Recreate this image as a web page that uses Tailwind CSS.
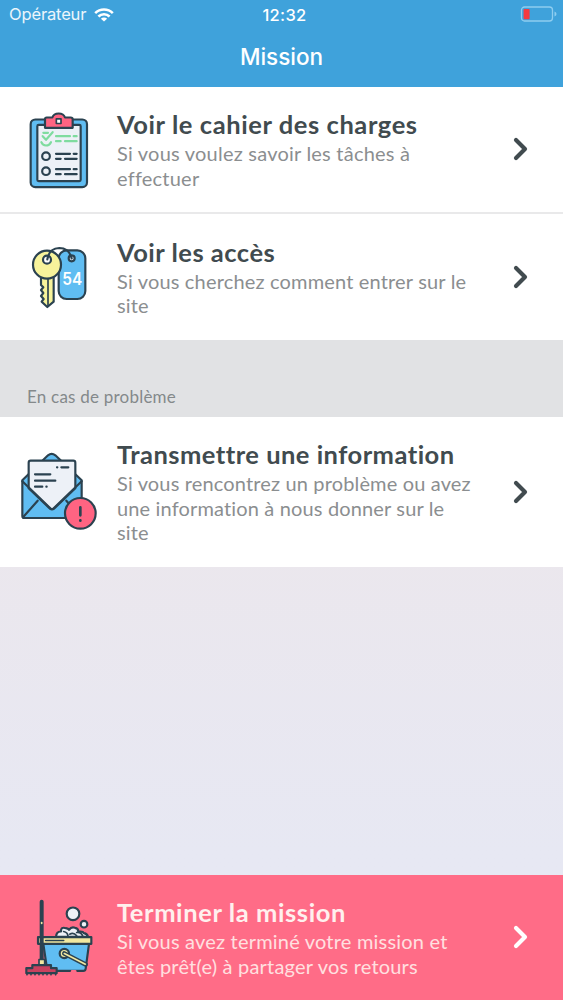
<!DOCTYPE html>
<html lang="fr">
<head>
  <meta charset="UTF-8" />
  <meta name="viewport" content="width=device-width, initial-scale=1.0"/>
  <title>Mission</title>
  <script src="https://cdn.jsdelivr.net/npm/@tailwindcss/browser@4"></script>
</head>
<body class="font-[Lato,sans-serif]">
  <div class="flex flex-col h-screen overflow-hidden bg-linear-to-b from-[#ebe7ed] from-55% to-[#e7e8f3] to-85%">

    <header class="h-[87px] shrink-0 bg-[#3fa2db] text-white font-[Inter,sans-serif]">
      <div class="grid grid-cols-3 items-center h-[29px] pl-[9px] pr-[6px]">
        <div class="flex items-center gap-2">
          <span class="text-[16.5px] tracking-[-0.15px] text-white/90">Opérateur</span>
          <svg class="w-[20px] h-[14px]" viewBox="0 0 20 14" fill="none" stroke="#fff" stroke-width="2.6">
            <path d="M1.2 5.1a12.6 12.6 0 0 1 17.6 0"/>
            <path d="M4.4 8.5a8 8 0 0 1 11.2 0"/>
            <path d="M10 13.6 6.9 10.7a4.4 4.4 0 0 1 6.2 0z" fill="#fff" stroke="none"/>
          </svg>
        </div>
        <div class="pl-[3px] pt-px text-center text-[16.5px] font-medium tracking-[0.3px]">12:32</div>
        <svg class="justify-self-end w-[37px] h-[17px]" viewBox="0 0 37 17">
          <rect x="1.5" y="1" width="31" height="14" rx="3" fill="none" stroke="#8ecdf0" stroke-width="1.3"/>
          <rect x="3.6" y="2.9" width="6" height="10.4" rx="1" fill="#f43a40"/>
          <path d="M34.5 5.500v5q2-.8 2-2.500t-2-2.500z" fill="#8ecdf0"/>
        </svg>
      </div>
      <h1 class="text-center text-[22.500px] leading-[56px] font-medium">Mission</h1>
    </header>

    <a class="flex items-center shrink-0 h-[125px] bg-white">
      <svg class="ml-[19px] size-[80px] shrink-0" viewBox="12 28.5 240 240" fill="none" stroke="#2b4250" stroke-width="6.500" stroke-linecap="round" stroke-linejoin="round">
        <rect x="47" y="57" width="169" height="203" rx="14" fill="#60bdf2"/>
        <rect x="67" y="73" width="130" height="169" rx="4" fill="#edf1f7"/>
        <path d="M90 82V56q0-5 5-5h17q4-12 19-12t19 12h17q6 0 6 5v26z" fill="#ff6482"/>
        <rect x="124" y="55" width="14" height="14" fill="#fff" stroke-width="5"/>
        <g stroke="#7fdc9f">
          <path d="m83 107 10 11 20-23M85 97h14M79 125q4 10 14 10t15-10"/>
          <path d="M123 107h42M176 107h9M123 122h14M150 122h35"/>
        </g>
        <circle cx="93" cy="167" r="11.500"/>
        <circle cx="93" cy="212" r="11.500"/>
        <path d="M123 160h42M176 160h9M123 175h14M150 175h35M123 206h42M176 206h9M123 221h14M150 221h35"/>
      </svg>
      <div class="ml-[18px] flex-1">
        <h2 class="text-[25.5px] leading-[33px] font-bold tracking-[0.58px] text-[#414b4f]">Voir le cahier des charges</h2>
        <p class="pb-[0.5px] text-[20px] leading-[24.5px] tracking-[0.22px] text-[#8b8e90]">Si vous voulez savoir les tâches à<br>effectuer</p>
      </div>
      <svg class="mr-[34px] mb-px w-[17px] h-[26px]" viewBox="0 0 17 26" fill="none" stroke="#414b4f" stroke-width="4.200" stroke-linecap="round" stroke-linejoin="round"><path d="m4 4 9 9-9 9"/></svg>
    </a>

    <a class="flex items-center shrink-0 h-[128px] bg-white border-t-2 border-[#e9e9ea]">
      <svg class="ml-[19px] size-[80px] shrink-0" viewBox="12 6 240 240" fill="none" stroke="#2b4250" stroke-width="6.500" stroke-linecap="round" stroke-linejoin="round">
        <rect x="131" y="46" width="80" height="146" rx="24" fill="#60bdf2"/>
        <circle cx="170" cy="70" r="9" fill="#edf1f7"/>
        <path d="M78 126v24l7 7-7 8 7 9-7 9 8 9-6 8 17 16 19-16v-74z" fill="#f7f39b"/>
        <path d="M99 132v80" stroke-width="5"/>
        <circle cx="96" cy="89" r="42" fill="#f7f39b"/>
        <circle cx="96" cy="74" r="12" fill="#fff"/>
        <path d="M97 73q5-33 36-34 29 0 37 31"/>
        <text x="142" y="149" font-family="Inter, sans-serif" font-size="51" font-weight="600" textLength="60" lengthAdjust="spacingAndGlyphs" fill="#fff" stroke="none">54</text>
      </svg>
      <div class="ml-[18px] flex-1">
        <h2 class="text-[25.5px] leading-[33px] font-bold tracking-[0.5px] text-[#414b4f]">Voir les accès</h2>
        <p class="pb-[0.5px] text-[20px] leading-[24.5px] tracking-[0.17px] text-[#8b8e90]">Si vous cherchez comment entrer sur le<br>site</p>
      </div>
      <svg class="mr-[34px] w-[17px] h-[26px]" viewBox="0 0 17 26" fill="none" stroke="#414b4f" stroke-width="4.200" stroke-linecap="round" stroke-linejoin="round"><path d="m4 4 9 9-9 9"/></svg>
    </a>

    <div class="flex items-end shrink-0 h-[77px] bg-[#e1e2e4] pl-[27px] pb-[8px]">
      <h3 class="text-[17px] leading-[24px] tracking-[0.22px] text-[#84898b]">En cas de problème</h3>
    </div>

    <a class="flex items-center shrink-0 h-[150px] bg-white">
      <svg class="ml-[19px] size-[80px] shrink-0" viewBox="27 36 240 240" fill="none" stroke="#2b4250" stroke-width="6.500" stroke-linecap="round" stroke-linejoin="round">
        <path d="M37 121 114 46q11-9 22 0l79 75v107q0 6-6 6H43q-6 0-6-6z" fill="#60bdf2"/>
        <path d="M56 145V68q0-6 6-6h128q6 0 6 6v77l-64 61q-6 5-12 0z" fill="#edf1f7"/>
        <path d="m37 124 84 81q5 4 10 0l84-81M39 232l44-50M213 232l-44-50"/>
        <path d="M141 82h1M154 82h21M75 103h46M75 122h61M75 140h22M109 140h1"/>
        <circle cx="211" cy="220" r="46" fill="#ff6482"/>
        <path d="M211 202v24M211 241v1" stroke-width="8"/>
      </svg>
      <div class="ml-[18px] flex-1">
        <h2 class="text-[25.5px] leading-[33px] font-bold tracking-[0.48px] text-[#414b4f]">Transmettre une information</h2>
        <p class="pb-[1px] text-[20px] leading-[24.5px] tracking-[0.15px] text-[#8b8e90]">Si vous rencontrez un problème ou avez<br>une information à nous donner sur le<br>site</p>
      </div>
      <svg class="mr-[34px] mb-px w-[17px] h-[26px]" viewBox="0 0 17 26" fill="none" stroke="#414b4f" stroke-width="4.200" stroke-linecap="round" stroke-linejoin="round"><path d="m4 4 9 9-9 9"/></svg>
    </a>

    <a class="flex items-center shrink-0 h-[125px] mt-auto bg-[#ff6c87]">
      <svg class="ml-[19px] size-[80px] shrink-0" viewBox="12 22.5 240 240" fill="none" stroke="#2b4250" stroke-width="6.500" stroke-linecap="round" stroke-linejoin="round">
        <circle cx="174" cy="70" r="19" fill="#edf1f7"/>
        <circle cx="207" cy="101" r="10" fill="#edf1f7"/>
        <path d="M123 139q1-17 15-16-1-15 15-10 7 1 9 5 7-10 18-6 10 1 10 12 14-2 17 4 10 2 12 11z" fill="#edf1f7"/>
        <path d="M146 123q12 2 13 14M164 131q12-7 21 5M185 126q13-2 18 10" stroke-width="5"/>
        <path d="M85 160 97 241h108q6 0 7-6l10-75z" fill="#60bdf2"/>
        <path d="M69 140h160v20H69z" fill="#f2e8a0"/>
        <path d="M92 150h54" stroke-width="5"/>
        <circle cx="148" cy="189" r="14" fill="#f2e8a0"/>
        <path d="m148 189 64 33" stroke-width="14"/>
        <path d="m148 189 63 32" stroke="#f2e8a0" stroke-width="5"/>
        <path d="M80 34v174" stroke-width="12"/>
        <path d="M80 96v3" stroke="#f2e8a0" stroke-width="5"/>
        <path d="M72 207h17v17H72z" fill="#f2e8a0" stroke-width="5"/>
        <path d="M52 224h56v9h17v15H34v-15h18z" fill="#c8415f"/>
        <path d="M36 249v4M48 249v4M60 249v4M72 249v4M84 249v4M96 249v4M108 249v4M122 249v4" stroke-width="5"/>
        <path d="M171 242h10" stroke="#ff6c87" stroke-width="7"/>
      </svg>
      <div class="ml-[18px] flex-1">
        <h2 class="text-[25.5px] leading-[33px] font-bold tracking-[0.6px] text-[#fff0ee]">Terminer la mission</h2>
        <p class="pb-[0.5px] text-[20px] leading-[24.5px] tracking-[0.2px] text-[#ffe0e0]">Si vous avez terminé votre mission et<br>êtes prêt(e) à partager vos retours</p>
      </div>
      <svg class="mr-[34px] mb-px w-[17px] h-[26px]" viewBox="0 0 17 26" fill="none" stroke="#fff" stroke-width="4.200" stroke-linecap="round" stroke-linejoin="round"><path d="m4 4 9 9-9 9"/></svg>
    </a>

  </div>
</body>
</html>
